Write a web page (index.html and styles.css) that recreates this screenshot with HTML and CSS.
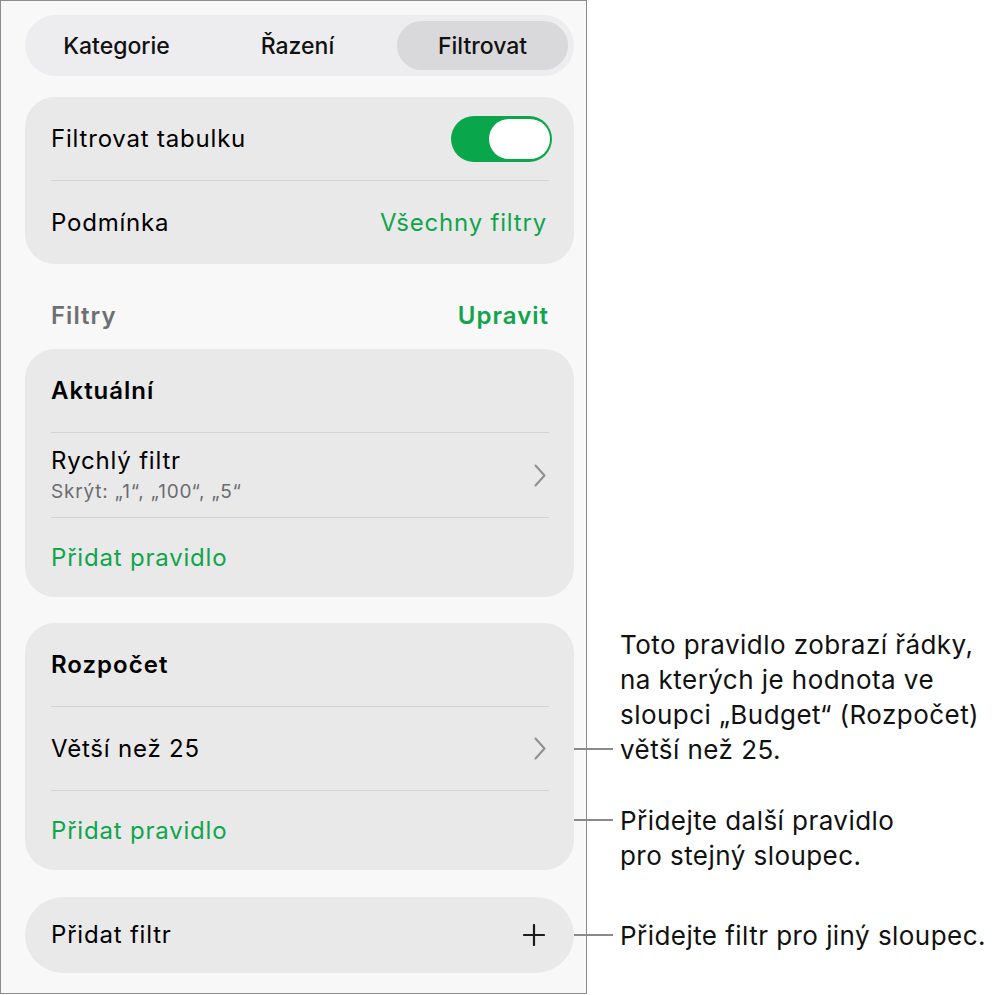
FILE: index.html
```html
<!DOCTYPE html>
<html lang="cs">
<head>
<meta charset="utf-8">
<title>Filtrovat</title>
<link rel="stylesheet" href="styles.css">
</head>
<body>
<div class="page">
  <div class="panel">
    <nav class="segmented">
      <span class="segment">Kategorie</span>
      <span class="segment">Řazení</span>
      <span class="segment is-selected"><span class="segment-pill">Filtrovat</span></span>
    </nav>

    <section class="card card-first">
      <div class="row">
        <span class="label">Filtrovat tabulku</span>
        <span class="toggle" role="switch" aria-checked="true"><span class="toggle-knob"></span></span>
      </div>
      <div class="row">
        <span class="label">Podmínka</span>
        <span class="value-link">Všechny filtry</span>
      </div>
    </section>

    <div class="section-head">
      <span class="section-title">Filtry</span>
      <span class="section-action">Upravit</span>
    </div>

    <section class="card">
      <div class="row row-head"><span class="label label-bold">Aktuální</span></div>
      <div class="row row-double">
        <span class="stack">
          <span class="label">Rychlý filtr</span>
          <span class="sublabel">Skrýt: „1“, „100“, „5“</span>
        </span>
        <svg class="chevron" width="12" height="23" viewBox="0 0 12 23" aria-hidden="true"><path d="M1.5 1.5 L10.5 11.5 L1.5 21.5" fill="none" stroke="#8e8e93" stroke-width="2" stroke-linecap="round" stroke-linejoin="round"/></svg>
      </div>
      <div class="row row-action"><span class="label label-green">Přidat pravidlo</span></div>
    </section>

    <section class="card card-gap">
      <div class="row row-head"><span class="label label-bold">Rozpočet</span></div>
      <div class="row">
        <span class="label">Větší než 25</span>
        <svg class="chevron" width="12" height="23" viewBox="0 0 12 23" aria-hidden="true"><path d="M1.5 1.5 L10.5 11.5 L1.5 21.5" fill="none" stroke="#8e8e93" stroke-width="2" stroke-linecap="round" stroke-linejoin="round"/></svg>
        <div class="callout callout-last">
          <span class="callout-line"></span>
          <p class="callout-text">Toto pravidlo zobrazí řádky,<br>na kterých je hodnota ve<br>sloupci „Budget“ (Rozpočet)<br>větší než 25.</p>
        </div>
      </div>
      <div class="row row-action">
        <span class="label label-green">Přidat pravidlo</span>
        <div class="callout callout-first">
          <span class="callout-line"></span>
          <p class="callout-text">Přidejte další pravidlo<br>pro stejný sloupec.</p>
        </div>
      </div>
    </section>

    <section class="card card-pill">
      <div class="row row-pill">
        <span class="label">Přidat filtr</span>
        <svg class="plus" width="22" height="22" viewBox="0 0 22 22" aria-hidden="true"><path d="M11 1 V21 M1 11 H21" fill="none" stroke="#1c1c1e" stroke-width="2.2" stroke-linecap="round"/></svg>
        <div class="callout callout-single">
          <span class="callout-line"></span>
          <p class="callout-text">Přidejte filtr pro jiný sloupec.</p>
        </div>
      </div>
    </section>
  </div>
</div>
</body>
</html>
```
FILE: styles.css
```css
* { box-sizing: border-box; }

html, body {
  margin: 0;
  padding: 0;
  background: #ffffff;
}

body {
  font-family: Inter, "Noto Sans", "Liberation Sans", sans-serif;
  color: #000000;
  -webkit-font-smoothing: antialiased;
}

.page {
  display: flex;
  align-items: flex-start;
}

.panel {
  width: 587px;
  height: 994px;
  border: 1px solid #8c8c8c;
  background: #f8f8f8;
  padding: 14px 12px 0 24px;
  display: flex;
  flex-direction: column;
}

/* segmented control */
.segmented {
  height: 61px;
  border-radius: 31px;
  background: #ededef;
  padding: 6px;
  display: flex;
}

.segment {
  flex: 1;
  display: flex;
  align-items: center;
  justify-content: center;
  font-size: 23px;
  font-weight: 500;
  letter-spacing: 0;
  color: #111111;
}

.segment:first-child { padding-right: 10px; }
.segment:nth-child(2) { padding-right: 14px; }

.segment.is-selected {
  justify-content: flex-end;
}

.segment-pill {
  width: 171px;
  height: 49px;
  border-radius: 25px;
  background: #d9d9dc;
  display: flex;
  align-items: center;
  justify-content: center;
}

/* cards and rows */
.card {
  background: #e9e9ea;
  border-radius: 30px;
  display: flex;
  flex-direction: column;
}

.card-first { margin-top: 21px; }
.card-gap { margin-top: 26px; }
.card-pill { margin-top: 27px; border-radius: 38px; }

.row {
  position: relative;
  height: 83px;
  padding: 0 22px 0 26px;
  display: flex;
  align-items: center;
  justify-content: space-between;
}

.row + .row::before {
  content: "";
  position: absolute;
  top: -1px;
  left: 26px;
  right: 25px;
  height: 1px;
  background: #d4d4d6;
}

.row + .row { margin-top: 1px; }

.row-double { height: 84px; }
.row-action { height: 79px; }
.row-pill { height: 76px; padding-right: 29px; }

.label {
  font-size: 24px;
  line-height: 28px;
  letter-spacing: 0.8px;
}

.label-bold { font-weight: 600; letter-spacing: 1px; }
.label-green { color: #10a54a; }

.stack {
  display: flex;
  flex-direction: column;
  gap: 6px;
}

.sublabel {
  font-size: 19px;
  line-height: 22px;
  color: #6c6c70;
  letter-spacing: 0.8px;
}

.value-link {
  font-size: 24px;
  line-height: 28px;
  letter-spacing: 0.8px;
  color: #10a54a;
  margin-right: 5px;
}

.chevron { margin-right: 6px; flex: none; }
.plus { flex: none; }

/* switch */
.toggle {
  width: 101px;
  height: 46px;
  border-radius: 23px;
  background: #0aa64b;
  padding: 3px 2px;
  display: flex;
  justify-content: flex-end;
}

.toggle-knob {
  width: 61px;
  height: 40px;
  border-radius: 20px;
  background: #ffffff;
}

/* section header */
.section-head {
  height: 85px;
  padding: 38px 25px 0 26px;
  display: flex;
  justify-content: space-between;
  align-items: flex-start;
  font-size: 24px;
  line-height: 28px;
  font-weight: 600;
  letter-spacing: 1px;
}

.section-title { color: #6f6f73; }
.section-action { color: #10a54a; }

/* annotations beside the panel */
.callout {
  position: absolute;
  left: 100%;
  display: flex;
  gap: 7px;
  white-space: nowrap;
}

.callout-line {
  flex: none;
  width: 39px;
  height: 35px;
  position: relative;
}

.callout-line::after {
  content: "";
  position: absolute;
  left: 0;
  right: 0;
  top: 16px;
  height: 2px;
  background: #8a8a8a;
}

.callout-text {
  margin: 0;
  font-size: 26px;
  line-height: 35px;
  color: #111111;
  letter-spacing: 0.45px;
}

.callout-last {
  align-items: flex-end;
  bottom: calc(50% - 18px);
}

.callout-first {
  align-items: flex-start;
  top: calc(50% - 28px);
}

.callout-single {
  align-items: center;
  top: calc(50% - 17px);
}
```
